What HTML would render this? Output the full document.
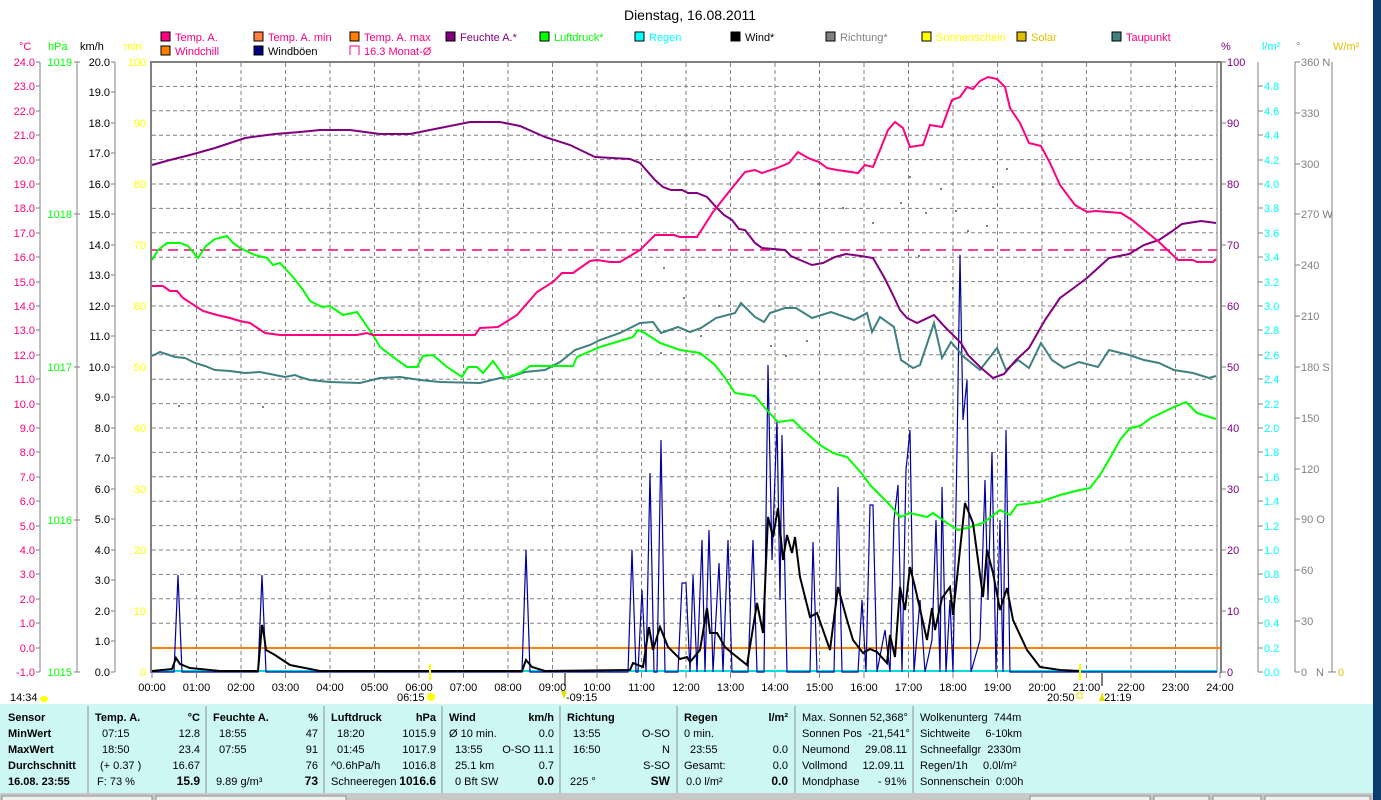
<!DOCTYPE html>
<html><head><meta charset="utf-8"><style>
body{margin:0;width:1381px;height:800px;overflow:hidden;background:#fff;font-family:"Liberation Sans",sans-serif;position:relative}
.t{position:absolute;font-size:11px;white-space:nowrap;line-height:12px}
.b{font-weight:bold}
.r{text-align:right}
</style></head><body>
<svg width="1381" height="800" style="position:absolute;left:0;top:0" font-family="Liberation Sans, sans-serif" font-size="11">
<rect x="1373" y="0" width="8" height="800" fill="#0c3b70"/>
<text x="690" y="20" font-size="14" text-anchor="middle">Dienstag, 16.08.2011</text>
<!-- legend -->
<g font-size="11">
<rect x="161" y="32" width="9" height="9" fill="#ff0080" stroke="#000"/><text x="175" y="41" fill="#ff0080">Temp. A.</text>
<rect x="254" y="32" width="9" height="9" fill="#ff8040" stroke="#000"/><text x="268" y="41" fill="#ff0080">Temp. A. min</text>
<rect x="350" y="32" width="9" height="9" fill="#ff8000" stroke="#000"/><text x="364" y="41" fill="#ff0080">Temp. A. max</text>
<rect x="446" y="32" width="9" height="9" fill="#800080" stroke="#000"/><text x="460" y="41" fill="#800080">Feuchte A.*</text>
<rect x="540" y="32" width="9" height="9" fill="#00ff00" stroke="#000"/><text x="554" y="41" fill="#00ff00">Luftdruck*</text>
<rect x="635" y="32" width="9" height="9" fill="#00ffff" stroke="#000"/><text x="649" y="41" fill="#00ffff">Regen</text>
<rect x="731" y="32" width="9" height="9" fill="#000" stroke="#000"/><text x="745" y="41">Wind*</text>
<rect x="826" y="32" width="9" height="9" fill="#808080" stroke="#000"/><text x="840" y="41" fill="#808080">Richtung*</text>
<rect x="922" y="32" width="9" height="9" fill="#ffff00" stroke="#000"/><text x="936" y="41" fill="#ffff00">Sonnenschein</text>
<rect x="1017" y="32" width="9" height="9" fill="#e0c000" stroke="#000"/><text x="1031" y="41" fill="#e0c000">Solar</text>
<rect x="1112" y="32" width="9" height="9" fill="#408080" stroke="#000"/><text x="1126" y="41" fill="#ff0080">Taupunkt</text>
<rect x="161" y="46" width="9" height="9" fill="#ff8000" stroke="#000"/><text x="175" y="55" fill="#ff0080">Windchill</text>
<rect x="254" y="46" width="9" height="9" fill="#000080" stroke="#000"/><text x="268" y="55">Windböen</text>
<path d="M350 55V46H359V55" fill="none" stroke="#ff0080"/><text x="364" y="55" fill="#ff0080">16.3 Monat-Ø</text>
</g>
<!-- unit labels -->
<text x="19" y="50" fill="#ff0080">°C</text><text x="48" y="50" fill="#00ff00">hPa</text><text x="80" y="50">km/h</text><text x="124" y="50" fill="#ffff00">min</text>
<text x="1221" y="50" fill="#800080">%</text><text x="1262" y="50" fill="#00ffff">l/m²</text><text x="1296" y="50" fill="#808080">°</text><text x="1333" y="50" fill="#e0c000">W/m²</text>
<!-- axis lines -->
<g stroke="#808080" fill="none">
<line x1="40" y1="62" x2="40" y2="672"/><line x1="77" y1="62" x2="77" y2="672"/><line x1="115" y1="62" x2="115" y2="672"/>
<line x1="1258" y1="62" x2="1258" y2="672"/><line x1="1295" y1="62" x2="1295" y2="672"/><line x1="1332" y1="62" x2="1332" y2="672"/>
<line x1="1217" y1="62" x2="1217" y2="672"/>
</g>
<rect x="150" y="61" width="1072" height="2" fill="#808080"/>
<rect x="150" y="61" width="2" height="612" fill="#808080"/>
<rect x="1220" y="61" width="2" height="612" fill="#808080"/>
<!-- grid -->
<g stroke="#808080" stroke-dasharray="4,3" fill="none">
<path d="M152 86.4H1217M152 110.8H1217M152 135.2H1217M152 159.6H1217M152 184H1217M152 208.4H1217M152 232.8H1217M152 257.2H1217M152 281.6H1217M152 306H1217M152 330.4H1217M152 354.8H1217M152 379.2H1217M152 403.6H1217M152 428H1217M152 452.4H1217M152 476.8H1217M152 501.2H1217M152 525.6H1217M152 550H1217M152 574.4H1217M152 598.8H1217M152 623.2H1217M152 647.6H1217"/>
<path d="M196.5 63V672M241 63V672M285.5 63V672M330 63V672M374.5 63V672M419 63V672M463.5 63V672M508 63V672M552.5 63V672M597 63V672M641.5 63V672M686 63V672M730.5 63V672M775 63V672M819.5 63V672M864 63V672M908.5 63V672M953 63V672M997.5 63V672M1042 63V672M1086.5 63V672M1131 63V672M1175.5 63V672"/>
</g>
<!-- direction dots -->
<g fill="#808080">
<rect x="178" y="405" width="2" height="2"/><rect x="262" y="406" width="2" height="2"/><rect x="663" y="267" width="2" height="2"/><rect x="683" y="297" width="2" height="2"/><rect x="700" y="335" width="2" height="2"/><rect x="718" y="305" width="2" height="2"/><rect x="660" y="352" width="2" height="2"/><rect x="770" y="345" width="2" height="2"/><rect x="785" y="355" width="2" height="2"/><rect x="806" y="340" width="2" height="2"/><rect x="817" y="183" width="2" height="2"/><rect x="842" y="207" width="2" height="2"/><rect x="872" y="222" width="2" height="2"/><rect x="909" y="176" width="2" height="2"/><rect x="925" y="212" width="2" height="2"/><rect x="940" y="188" width="2" height="2"/><rect x="955" y="210" width="2" height="2"/><rect x="967" y="230" width="2" height="2"/><rect x="992" y="186" width="2" height="2"/><rect x="1006" y="168" width="2" height="2"/><rect x="900" y="202" width="2" height="2"/><rect x="986" y="225" width="2" height="2"/><rect x="918" y="255" width="2" height="2"/><rect x="952" y="287" width="2" height="2"/>
</g>
<!-- monat avg -->
<line x1="152" y1="250" x2="1217" y2="250" stroke="#ff0080" stroke-width="1.5" stroke-dasharray="10,6"/>
<!-- orange windchill/0 -->
<line x1="152" y1="648" x2="1220" y2="648" stroke="#ff8000" stroke-width="2"/>
<line x1="152" y1="671" x2="1217" y2="671" stroke="#00e0e0" stroke-width="2"/>
<!-- gust -->
<polyline fill="none" stroke="#0000a0" stroke-width="1.2" points="152,672 174,672 178,575 182,672 258,672 262,575 266,672 522,672 526,550 530,672 628,672 632,550 636,672 638,672 642,590 646,672 650,473 654,672 657,672 661,440 665,672 678,672 682,583 686,583 690,672 693,575 697,672 702,540 705,672 709,530 713,672 719,563 723,672 728,540 732,672 748,672 753,540 757,672 764,672 768,365 772,560 777,420 780,600 782,435 787,672 810,672 813,542 817,672 834,672 838,487 842,672 858,672 862,600 866,672 870,505 873,505 877,672 885,630 890,672 894,520 898,485 902,672 906,470 910,430 914,672 920,600 925,672 932,640 936,520 940,672 942,487 946,672 950,600 953,672 957,450 960,255 963,420 967,380 971,672 980,640 985,480 988,600 992,452 996,672 1000,520 1003,672 1006,430 1010,672 1217,672"/>
<!-- taupunkt -->
<polyline fill="none" stroke="#408080" stroke-width="2" points="152,356 160,352 175,357 185,358 195,363 205,366 215,370 230,371 245,373 260,372 270,374 285,377 295,375 300,377 310,380 330,382 360,383 380,378 400,377 420,380 440,382 480,383 500,378 510,377 525,372 545,370 560,362 575,350 590,345 600,340 620,333 640,323 653,322 661,333 678,327 690,332 701,328 716,318 735,313 741,303 755,317 764,322 770,313 785,308 796,308 812,318 831,312 854,320 867,313 872,332 880,317 894,327 901,360 913,368 920,365 934,323 942,358 951,342 964,357 980,370 997,348 1006,370 1018,360 1029,368 1041,343 1052,360 1064,368 1079,362 1098,367 1109,350 1129,355 1144,360 1159,363 1174,370 1193,373 1209,378 1216,376"/>
<!-- luftdruck -->
<polyline fill="none" stroke="#00ff00" stroke-width="2" points="152,260 158,250 167,243 180,243 188,246 198,258 206,246 215,239 227,236 233,243 240,248 255,255 267,258 273,265 280,263 293,277 303,290 310,301 322,307 330,306 343,315 357,312 373,335 380,347 393,357 407,367 417,367 423,356 433,355 447,367 462,377 468,367 477,367 483,373 493,361 505,378 520,373 530,366 573,366 577,357 600,347 633,337 638,330 645,333 660,343 680,350 700,353 715,365 725,378 735,393 755,396 765,408 778,422 793,420 803,430 820,445 833,453 847,457 863,475 870,485 877,492 890,505 900,517 910,513 927,517 933,513 947,523 958,530 967,528 983,523 1000,510 1010,515 1017,505 1040,502 1060,495 1080,490 1090,488 1100,475 1110,458 1120,440 1130,428 1140,426 1151,418 1174,407 1186,402 1197,413 1216,419"/>
<!-- feuchte -->
<polyline fill="none" stroke="#800080" stroke-width="2" points="152,165 170,160 190,155 215,148 245,138 275,134 300,132 320,130 350,130 380,134 410,134 440,128 470,122 500,122 520,126 545,137 570,145 595,157 630,159 640,163 655,180 663,187 671,190 682,190 688,193 697,193 707,197 716,207 724,215 732,220 739,229 745,230 755,243 762,248 785,250 791,256 800,260 812,265 823,263 835,257 846,254 861,256 873,258 884,277 892,293 900,310 907,318 917,323 934,315 945,327 961,343 968,355 980,367 993,378 1004,374 1016,360 1029,348 1045,320 1060,298 1071,290 1087,278 1098,268 1109,258 1129,254 1144,245 1159,240 1171,232 1182,224 1201,221 1216,223"/>
<!-- temp -->
<polyline fill="none" stroke="#ff0080" stroke-width="2" points="152,286 163,286 170,291 177,291 183,298 203,311 217,315 230,318 240,321 250,323 265,333 280,335 357,335 367,333 373,335 475,335 480,328 498,327 517,315 537,292 553,282 562,273 573,273 590,261 597,260 610,262 620,262 640,250 655,235 674,235 680,237 697,237 713,212 732,188 745,172 755,170 762,173 777,168 789,163 798,152 808,158 819,162 827,168 837,170 858,173 865,165 873,167 880,150 888,130 895,122 903,128 910,147 923,145 930,125 942,127 952,100 960,97 967,87 973,89 980,81 988,77 997,79 1005,87 1010,108 1020,123 1029,143 1041,146 1050,163 1060,185 1075,205 1087,212 1096,211 1121,213 1132,220 1148,233 1159,242 1178,260 1193,260 1197,262 1213,262 1216,259"/>
<!-- wind -->
<polyline fill="none" stroke="#000" stroke-width="2" points="152,671 172,669 176,658 180,664 190,668 220,671 258,671 262,625 264,635 266,650 275,655 290,665 320,671 522,671 526,660 532,667 545,671 630,670 633,663 643,667 649,627 653,650 660,627 668,647 680,659 687,657 690,662 700,650 707,608 710,633 717,633 725,647 732,653 747,665 757,603 763,633 768,517 773,537 778,508 783,560 787,535 792,553 795,537 800,577 810,617 817,613 830,650 838,587 847,620 853,640 863,653 870,649 877,652 887,663 890,635 895,657 900,587 905,610 910,567 915,587 927,640 932,608 935,630 942,598 950,587 953,615 965,503 973,523 983,597 987,550 993,573 1000,610 1007,588 1013,620 1027,650 1040,667 1060,670 1080,671"/>
<!-- sun markers -->
<line x1="430" y1="664" x2="430" y2="680" stroke="#ffff00" stroke-width="2"/>
<line x1="1080" y1="664" x2="1080" y2="680" stroke="#ffff00" stroke-width="2"/>
<line x1="565" y1="672" x2="565" y2="686" stroke="#808080" stroke-width="2"/>
<line x1="1102" y1="672" x2="1102" y2="686" stroke="#808080" stroke-width="2"/>
<!-- ticks and left labels -->
<g fill="#ff0080" text-anchor="end">
<text x="35" y="66">24.0</text><text x="35" y="90">23.0</text><text x="35" y="115">22.0</text><text x="35" y="139">21.0</text><text x="35" y="164">20.0</text><text x="35" y="188">19.0</text><text x="35" y="212">18.0</text><text x="35" y="237">17.0</text><text x="35" y="261">16.0</text><text x="35" y="286">15.0</text><text x="35" y="310">14.0</text><text x="35" y="334">13.0</text><text x="35" y="359">12.0</text><text x="35" y="383">11.0</text><text x="35" y="408">10.0</text><text x="35" y="432">9.0</text><text x="35" y="456">8.0</text><text x="35" y="481">7.0</text><text x="35" y="505">6.0</text><text x="35" y="530">5.0</text><text x="35" y="554">4.0</text><text x="35" y="578">3.0</text><text x="35" y="603">2.0</text><text x="35" y="627">1.0</text><text x="35" y="652">0.0</text><text x="35" y="676">-1.0</text>
</g>
<g fill="#00ff00" text-anchor="end"><text x="72" y="66">1019</text><text x="72" y="218">1018</text><text x="72" y="371">1017</text><text x="72" y="524">1016</text><text x="72" y="676">1015</text></g>
<g fill="#000" text-anchor="end">
<text x="110" y="66">20.0</text><text x="110" y="96">19.0</text><text x="110" y="127">18.0</text><text x="110" y="157">17.0</text><text x="110" y="188">16.0</text><text x="110" y="218">15.0</text><text x="110" y="249">14.0</text><text x="110" y="279">13.0</text><text x="110" y="310">12.0</text><text x="110" y="340">11.0</text><text x="110" y="371">10.0</text><text x="110" y="401">9.0</text><text x="110" y="432">8.0</text><text x="110" y="462">7.0</text><text x="110" y="493">6.0</text><text x="110" y="523">5.0</text><text x="110" y="554">4.0</text><text x="110" y="584">3.0</text><text x="110" y="615">2.0</text><text x="110" y="645">1.0</text><text x="110" y="676">0.0</text>
</g>
<g fill="#ffff00" text-anchor="end"><text x="146" y="66">100</text><text x="146" y="127">90</text><text x="146" y="188">80</text><text x="146" y="249">70</text><text x="146" y="310">60</text><text x="146" y="371">50</text><text x="146" y="432">40</text><text x="146" y="493">30</text><text x="146" y="554">20</text><text x="146" y="615">10</text><text x="146" y="676">0</text></g>
<g fill="#800080"><text x="1227" y="66">100</text><text x="1227" y="127">90</text><text x="1227" y="188">80</text><text x="1227" y="249">70</text><text x="1227" y="310">60</text><text x="1227" y="371">50</text><text x="1227" y="432">40</text><text x="1227" y="493">30</text><text x="1227" y="554">20</text><text x="1227" y="615">10</text><text x="1227" y="676">0</text></g>
<g fill="#00ffff"><text x="1264" y="90">4.8</text><text x="1264" y="115">4.6</text><text x="1264" y="139">4.4</text><text x="1264" y="164">4.2</text><text x="1264" y="188">4.0</text><text x="1264" y="212">3.8</text><text x="1264" y="237">3.6</text><text x="1264" y="261">3.4</text><text x="1264" y="286">3.2</text><text x="1264" y="310">3.0</text><text x="1264" y="334">2.8</text><text x="1264" y="359">2.6</text><text x="1264" y="383">2.4</text><text x="1264" y="408">2.2</text><text x="1264" y="432">2.0</text><text x="1264" y="456">1.8</text><text x="1264" y="481">1.6</text><text x="1264" y="505">1.4</text><text x="1264" y="530">1.2</text><text x="1264" y="554">1.0</text><text x="1264" y="578">0.8</text><text x="1264" y="603">0.6</text><text x="1264" y="627">0.4</text><text x="1264" y="652">0.2</text><text x="1264" y="676">0.0</text></g>
<g fill="#808080"><text x="1301" y="66">360 N</text><text x="1301" y="117">330</text><text x="1301" y="168">300</text><text x="1301" y="218">270 W</text><text x="1301" y="269">240</text><text x="1301" y="320">210</text><text x="1301" y="371">180 S</text><text x="1301" y="422">150</text><text x="1301" y="473">120</text><text x="1301" y="523">90  O</text><text x="1301" y="574">60</text><text x="1301" y="625">30</text><text x="1301" y="676">0</text><text x="1316" y="676">N</text></g>
<text x="1338" y="676" fill="#e0c000">0</text>
<g stroke="#808080">
<path d="M36 62H40M36 86H40M36 111H40M36 135H40M36 160H40M36 184H40M36 208H40M36 233H40M36 257H40M36 282H40M36 306H40M36 330H40M36 355H40M36 379H40M36 404H40M36 428H40M36 452H40M36 477H40M36 501H40M36 526H40M36 550H40M36 574H40M36 599H40M36 623H40M36 648H40M36 672H40"/>
<path d="M74 62H80M74 214H80M74 367H80M74 520H80M74 672H80"/>
<path d="M111 62H115M111 92H115M111 123H115M111 153H115M111 184H115M111 214H115M111 245H115M111 275H115M111 306H115M111 336H115M111 367H115M111 397H115M111 428H115M111 458H115M111 489H115M111 519H115M111 550H115M111 580H115M111 611H115M111 641H115M111 672H115"/>
<path d="M1222 62H1226M1222 123H1226M1222 184H1226M1222 245H1226M1222 306H1226M1222 367H1226M1222 428H1226M1222 489H1226M1222 550H1226M1222 611H1226M1222 672H1226"/>
<path d="M1258 86H1263M1258 111H1263M1258 135H1263M1258 160H1263M1258 184H1263M1258 208H1263M1258 233H1263M1258 257H1263M1258 282H1263M1258 306H1263M1258 330H1263M1258 355H1263M1258 379H1263M1258 404H1263M1258 428H1263M1258 452H1263M1258 477H1263M1258 501H1263M1258 526H1263M1258 550H1263M1258 574H1263M1258 599H1263M1258 623H1263M1258 648H1263M1258 672H1263"/>
<path d="M1295 62H1300M1295 113H1300M1295 164H1300M1295 214H1300M1295 265H1300M1295 316H1300M1295 367H1300M1295 418H1300M1295 469H1300M1295 519H1300M1295 570H1300M1295 621H1300M1295 672H1300"/>
<path d="M1328 672H1336"/>
<path d="M152 672V678M196.5 672V678M241 672V678M285.5 672V678M330 672V678M374.5 672V678M419 672V678M463.5 672V678M508 672V678M552.5 672V678M597 672V678M641.5 672V678M686 672V678M730.5 672V678M775 672V678M819.5 672V678M864 672V678M908.5 672V678M953 672V678M997.5 672V678M1042 672V678M1086.5 672V678M1131 672V678M1175.5 672V678M1220 672V678"/>
</g>
<g text-anchor="middle">
<text x="152" y="691">00:00</text><text x="196.5" y="691">01:00</text><text x="241" y="691">02:00</text><text x="285.5" y="691">03:00</text><text x="330" y="691">04:00</text><text x="374.5" y="691">05:00</text><text x="419" y="691">06:00</text><text x="463.5" y="691">07:00</text><text x="508" y="691">08:00</text><text x="552.5" y="691">09:00</text><text x="597" y="691">10:00</text><text x="641.5" y="691">11:00</text><text x="686" y="691">12:00</text><text x="730.5" y="691">13:00</text><text x="775" y="691">14:00</text><text x="819.5" y="691">15:00</text><text x="864" y="691">16:00</text><text x="908.5" y="691">17:00</text><text x="953" y="691">18:00</text><text x="997.5" y="691">19:00</text><text x="1042" y="691">20:00</text><text x="1086.5" y="691">21:00</text><text x="1131" y="691">22:00</text><text x="1175.5" y="691">23:00</text><text x="1220" y="691">24:00</text>
</g>
<text x="10" y="701">14:34</text><ellipse cx="44" cy="699" rx="4" ry="3" fill="#ffff00"/>
<text x="397" y="701">06:15</text><circle cx="431" cy="697" r="4" fill="#ffff00"/>
<text x="566" y="701">-09:15</text><path d="M561 691L564 699L567 691" fill="#e0e000"/>
<text x="1047" y="701">20:50</text><rect x="1077" y="693" width="5" height="5" fill="none" stroke="#e0e000"/>
<text x="1104" y="701">21:19</text><path d="M1099 701L1102 692L1105 701" fill="#e0e000"/>
<!-- table -->
<rect x="0" y="704" width="1373" height="90" fill="#ccf7f5"/>
<rect x="0" y="793" width="1373" height="7" fill="#c8c8c8"/>
<g fill="#f0f0f0" stroke="#909090"><rect x="2" y="796" width="150" height="5"/><rect x="156" y="796" width="190" height="5"/><rect x="1030" y="796" width="120" height="5"/><rect x="1154" y="796" width="55" height="5"/><rect x="1213" y="796" width="48" height="5"/><rect x="1265" y="796" width="105" height="5"/></g>
<g stroke="#909090"><path d="M88 706V793M206 706V793M324 706V793M442 706V793M560 706V793M677 706V793M795 706V793M913 706V793"/></g>
</svg>
<div class="t b" style="left:8px;top:712px">Sensor</div>
<div class="t b" style="left:8px;top:728px">MinWert</div>
<div class="t b" style="left:8px;top:744px">MaxWert</div>
<div class="t b" style="left:8px;top:760px">Durchschnitt</div>
<div class="t b" style="left:8px;top:776px">16.08. 23:55</div>

<div class="t b" style="left:95px;top:712px">Temp. A.</div><div class="t b r" style="left:150px;width:50px;top:712px">°C</div>
<div class="t" style="left:102px;top:728px">07:15</div><div class="t r" style="left:150px;width:50px;top:728px">12.8</div>
<div class="t" style="left:102px;top:744px">18:50</div><div class="t r" style="left:150px;width:50px;top:744px">23.4</div>
<div class="t" style="left:100px;top:760px">(+ 0.37 )</div><div class="t r" style="left:150px;width:50px;top:760px">16.67</div>
<div class="t" style="left:97px;top:776px">F: 73 %</div><div class="t b r" style="left:150px;width:50px;top:775px;font-size:12px">15.9</div>

<div class="t b" style="left:213px;top:712px">Feuchte A.</div><div class="t b r" style="left:268px;width:50px;top:712px">%</div>
<div class="t" style="left:219px;top:728px">18:55</div><div class="t r" style="left:268px;width:50px;top:728px">47</div>
<div class="t" style="left:219px;top:744px">07:55</div><div class="t r" style="left:268px;width:50px;top:744px">91</div>
<div class="t r" style="left:268px;width:50px;top:760px">76</div>
<div class="t" style="left:216px;top:776px">9.89 g/m³</div><div class="t b r" style="left:268px;width:50px;top:775px;font-size:12px">73</div>

<div class="t b" style="left:331px;top:712px">Luftdruck</div><div class="t b r" style="left:386px;width:50px;top:712px">hPa</div>
<div class="t" style="left:337px;top:728px">18:20</div><div class="t r" style="left:386px;width:50px;top:728px">1015.9</div>
<div class="t" style="left:337px;top:744px">01:45</div><div class="t r" style="left:386px;width:50px;top:744px">1017.9</div>
<div class="t" style="left:331px;top:760px">^0.6hPa/h</div><div class="t r" style="left:386px;width:50px;top:760px">1016.8</div>
<div class="t" style="left:331px;top:776px">Schneeregen</div><div class="t b r" style="left:386px;width:50px;top:775px;font-size:12px">1016.6</div>

<div class="t b" style="left:449px;top:712px">Wind</div><div class="t b r" style="left:504px;width:50px;top:712px">km/h</div>
<div class="t" style="left:449px;top:728px">Ø 10 min.</div><div class="t r" style="left:504px;width:50px;top:728px">0.0</div>
<div class="t" style="left:455px;top:744px">13:55</div><div class="t r" style="left:494px;width:60px;top:744px">O-SO 11.1</div>
<div class="t" style="left:455px;top:760px">25.1 km</div><div class="t r" style="left:504px;width:50px;top:760px">0.7</div>
<div class="t" style="left:455px;top:776px">0 Bft SW</div><div class="t b r" style="left:504px;width:50px;top:775px;font-size:12px">0.0</div>

<div class="t b" style="left:567px;top:712px">Richtung</div>
<div class="t" style="left:573px;top:728px">13:55</div><div class="t r" style="left:620px;width:50px;top:728px">O-SO</div>
<div class="t" style="left:573px;top:744px">16:50</div><div class="t r" style="left:620px;width:50px;top:744px">N</div>
<div class="t r" style="left:620px;width:50px;top:760px">S-SO</div>
<div class="t" style="left:570px;top:776px">225 °</div><div class="t b r" style="left:620px;width:50px;top:775px;font-size:12px">SW</div>

<div class="t b" style="left:684px;top:712px">Regen</div><div class="t b r" style="left:738px;width:50px;top:712px">l/m²</div>
<div class="t" style="left:684px;top:728px">0 min.</div>
<div class="t" style="left:690px;top:744px">23:55</div><div class="t r" style="left:738px;width:50px;top:744px">0.0</div>
<div class="t" style="left:684px;top:760px">Gesamt:</div><div class="t r" style="left:738px;width:50px;top:760px">0.0</div>
<div class="t" style="left:686px;top:776px">0.0 l/m²</div><div class="t b r" style="left:738px;width:50px;top:775px;font-size:12px">0.0</div>

<div class="t" style="left:802px;top:712px">Max. Sonnen 52,368°</div>
<div class="t" style="left:802px;top:728px">Sonnen Pos &nbsp;-21,541°</div>
<div class="t" style="left:802px;top:744px">Neumond &nbsp;&nbsp;&nbsp;&nbsp;29.08.11</div>
<div class="t" style="left:802px;top:760px">Vollmond &nbsp;&nbsp;&nbsp;&nbsp;12.09.11</div>
<div class="t" style="left:802px;top:776px">Mondphase &nbsp;&nbsp;&nbsp;&nbsp;&nbsp;- 91%</div>

<div class="t" style="left:920px;top:712px">Wolkenunterg &nbsp;744m</div>
<div class="t" style="left:920px;top:728px">Sichtweite &nbsp;&nbsp;&nbsp;&nbsp;6-10km</div>
<div class="t" style="left:920px;top:744px">Schneefallgr &nbsp;2330m</div>
<div class="t" style="left:920px;top:760px">Regen/1h &nbsp;&nbsp;&nbsp;&nbsp;0.0l/m²</div>
<div class="t" style="left:920px;top:776px">Sonnenschein &nbsp;0:00h</div>
</body></html>
